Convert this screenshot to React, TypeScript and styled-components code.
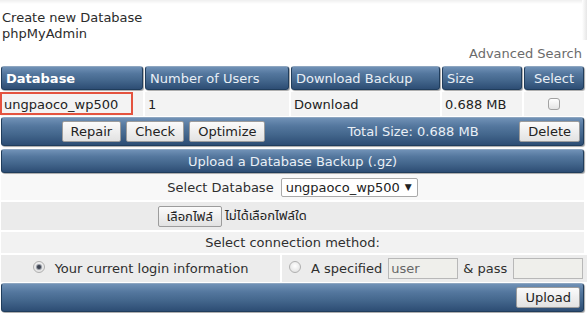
import React from "react";
import styled, { createGlobalStyle, css } from "styled-components";

const Global = createGlobalStyle`
  html, body { margin: 0; padding: 0; background: #ffffff; }
  body {
    font-family: "DejaVu Sans", Verdana, "Noto Sans Thai", "Noto Sans", sans-serif;
    font-size: 13px;
    color: #333333;
    width: 587px;
    height: 313px;
    overflow: hidden;
  }
  * { box-sizing: border-box; }
`;

const Page = styled.div`
  position: relative;
  width: 587px;
  height: 313px;
  background: linear-gradient(to bottom, #efefef 0px, #ffffff 4px);
`;

const EdgeStrip = styled.div`
  position: absolute;
  right: 0;
  top: 0;
  width: 5px;
  height: 40px;
  background: linear-gradient(to right, #ffffff, #e6e6e6);
`;

const Intro = styled.div`
  padding: 10px 0 0 2px;
  line-height: 16px;
  color: #2b2b2b;
  height: 42px;
`;

const AdvancedRow = styled.div`
  height: 24px;
  padding: 4px 5px 0 0;
  line-height: 16px;
  text-align: right;
  color: #6b6b6b;
`;

const Sheet = styled.div`
  margin-left: 1px;
  width: 583px;
  display: flex;
  flex-direction: column;
`;

const cols = css`
  display: grid;
  grid-template-columns: 142px 144px 149px 80px 60px;
  column-gap: 2px;
`;

const HeaderRow = styled.div`
  ${cols};
  height: 24px;
`;

const blue = css`
  background: linear-gradient(
    to bottom,
    #7091b6 0%,
    #54779e 30%,
    #44678d 60%,
    #2d4d74 100%
  );
  border: 1px solid #203d5c;
  border-top-color: #8ea6c0;
  border-radius: 3px;
  box-shadow: 1px 1px 1px rgba(0, 0, 0, 0.35);
`;

const HeadCell = styled.div<{ $bold?: boolean; $center?: boolean }>`
  ${blue};
  display: flex;
  align-items: center;
  justify-content: ${(p) => (p.$center ? "center" : "flex-start")};
  padding-left: ${(p) => (p.$center ? "0" : "4px")};
  color: ${(p) => (p.$bold ? "#ffffff" : "#e9eff6")};
  font-weight: ${(p) => (p.$bold ? "bold" : "normal")};
  white-space: nowrap;
`;

const DataRow = styled.div`
  ${cols};
  height: 24px;
  margin-top: 2px;
`;

const DataCell = styled.div<{ $center?: boolean }>`
  position: relative;
  background: #f3f3f3;
  display: flex;
  align-items: center;
  justify-content: ${(p) => (p.$center ? "center" : "flex-start")};
  padding-left: ${(p) => (p.$center ? "0" : "3px")};
  color: #222;
  white-space: nowrap;
`;

const Highlight = styled.span`
  position: absolute;
  left: -1px;
  top: 0;
  width: 133px;
  height: 23px;
  border: 2px solid #e4533f;
  pointer-events: none;
`;

const CheckBox = styled.span`
  width: 12px;
  height: 12px;
  border: 1px solid #a2a2a2;
  border-radius: 3px;
  background: linear-gradient(#ffffff, #e4e4e4);
  margin-top: -1px;
`;

const Bar = styled.div<{ $h: number; $mt: number }>`
  ${blue};
  height: ${(p) => p.$h}px;
  margin-top: ${(p) => p.$mt}px;
  color: #e9eff6;
`;

const ActionBar = styled(Bar)`
  display: grid;
  grid-template-columns: 323px 176px 1fr;
  align-items: center;
`;

const ButtonGroup = styled.div`
  display: flex;
  justify-content: center;
  gap: 5px;
`;

const Centered = styled.div`
  text-align: center;
  white-space: nowrap;
`;

const RightCell = styled.div`
  display: flex;
  justify-content: flex-end;
  padding-right: 3px;
`;

const Button = styled.button`
  height: 21px;
  padding: 0 8px;
  font-family: inherit;
  font-size: 13px;
  color: #222;
  background: linear-gradient(#fbfbfb, #e2e2e2);
  border: 1px solid #9c9c9c;
  border-radius: 2px;
  white-space: nowrap;
  cursor: pointer;
`;

const TitleBar = styled(Bar)`
  display: flex;
  align-items: center;
  justify-content: center;
  padding-top: 1px;
`;

const PlainRow = styled.div<{ $bg: string; $h: number; $mt: number }>`
  height: ${(p) => p.$h}px;
  margin-top: ${(p) => p.$mt}px;
  background: ${(p) => p.$bg};
  display: flex;
  align-items: center;
  justify-content: center;
  gap: 7px;
  color: #2f2f2f;
  white-space: nowrap;
`;

const SelectBox = styled.div`
  height: 19px;
  width: 137px;
  border: 1px solid #a9a9a9;
  border-radius: 2px;
  background: #ffffff;
  display: flex;
  align-items: center;
  padding-left: 4px;
  gap: 5px;
  color: #222;
  margin-top: -1px;
`;

const Arrow = styled.span`
  font-size: 9px;
  color: #222;
`;

const FileInput = styled.div`
  width: 270px;
  display: flex;
  align-items: center;
  gap: 3px;
  color: #222;
`;

const SplitRow = styled.div`
  display: grid;
  grid-template-columns: 279px 1fr;
  column-gap: 2px;
  height: 27px;
  margin-top: 2px;
`;

const SplitCell = styled.div<{ $center?: boolean }>`
  background: #ececec;
  display: flex;
  align-items: center;
  justify-content: ${(p) => (p.$center ? "center" : "flex-start")};
  padding-left: ${(p) => (p.$center ? "0" : "7px")};
  color: #2f2f2f;
  white-space: nowrap;
`;

const Radio = styled.span<{ $on?: boolean }>`
  position: relative;
  width: 12px;
  height: 12px;
  border-radius: 50%;
  border: 1px solid #b0b0b0;
  background: radial-gradient(circle at 50% 40%, #ffffff, #dcdcdc);
  margin-right: 10px;
  margin-top: -3px;
  flex: none;
  &::after {
    content: "";
    display: ${(p) => (p.$on ? "block" : "none")};
    position: absolute;
    left: 3px;
    top: 3px;
    width: 4px;
    height: 4px;
    border-radius: 50%;
    background: #3c4250;
    box-shadow: 0 0 1px 1px #8a8f99;
  }
`;

const TextBox = styled.div`
  width: 70px;
  height: 21px;
  border: 1px solid #b8b8b8;
  background: #efefeb;
  color: #666;
  padding-left: 2px;
  display: flex;
  align-items: center;
  margin: 0 5px 0 6px;
`;

const BottomBar = styled(Bar)`
  display: flex;
  align-items: center;
  justify-content: flex-end;
  padding-right: 3px;
`;

export default function App() {
  return (
    <>
      <Global />
      <Page>
        <EdgeStrip />
        <Intro>
          Create new Database
          <br />
          phpMyAdmin
        </Intro>
        <AdvancedRow>Advanced Search</AdvancedRow>
        <Sheet>
          <HeaderRow>
            <HeadCell $bold>Database</HeadCell>
            <HeadCell>Number of Users</HeadCell>
            <HeadCell>Download Backup</HeadCell>
            <HeadCell>Size</HeadCell>
            <HeadCell $center>Select</HeadCell>
          </HeaderRow>
          <DataRow>
            <DataCell>
              ungpaoco_wp500
              <Highlight />
            </DataCell>
            <DataCell>1</DataCell>
            <DataCell>Download</DataCell>
            <DataCell>0.688 MB</DataCell>
            <DataCell $center>
              <CheckBox />
            </DataCell>
          </DataRow>
          <ActionBar $h={29} $mt={1}>
            <ButtonGroup>
              <Button>Repair</Button>
              <Button>Check</Button>
              <Button>Optimize</Button>
            </ButtonGroup>
            <Centered>Total Size: 0.688 MB</Centered>
            <RightCell>
              <Button>Delete</Button>
            </RightCell>
          </ActionBar>
          <TitleBar $h={24} $mt={3}>
            Upload a Database Backup (.gz)
          </TitleBar>
          <PlainRow $bg="#f8f8f8" $h={25} $mt={2}>
            <span>Select Database</span>
            <SelectBox>
              ungpaoco_wp500 <Arrow>▼</Arrow>
            </SelectBox>
          </PlainRow>
          <PlainRow $bg="#ebebeb" $h={28} $mt={2}>
            <FileInput>
              <Button>เลือกไฟล์</Button>
              <span>ไม่ได้เลือกไฟล์ใด</span>
            </FileInput>
          </PlainRow>
          <PlainRow $bg="#f2f2f2" $h={21} $mt={2}>
            Select connection method:
          </PlainRow>
          <SplitRow>
            <SplitCell $center>
              <Radio $on />
              Your current login information
            </SplitCell>
            <SplitCell>
              <Radio />
              A specified
              <TextBox>user</TextBox>
              &amp; pass
              <TextBox />
            </SplitCell>
          </SplitRow>
          <BottomBar $h={29} $mt={1}>
            <Button>Upload</Button>
          </BottomBar>
        </Sheet>
      </Page>
    </>
  );
}
